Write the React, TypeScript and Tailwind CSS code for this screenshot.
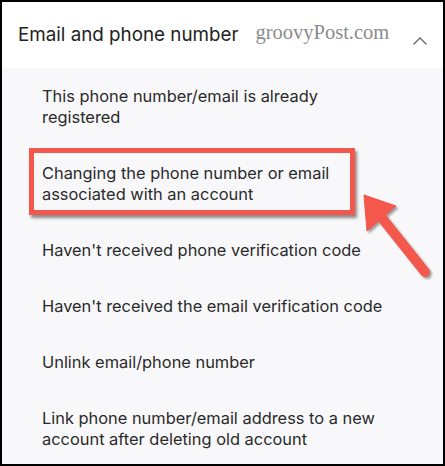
import React from 'react';

const itemLines: string[][] = [
  ['This phone number/email is already', 'registered'],
  ['Changing the phone number or email', 'associated with an account'],
  ["Haven't received phone verification code"],
  ["Haven't received the email verification code"],
  ['Unlink email/phone number'],
  ['Link phone number/email address to a new', 'account after deleting old account'],
];

function Arrow() {
  return (
    <svg className="absolute inset-0 pointer-events-none" width={445} height={466}>
      <defs>
        <filter id="sh" x="-20%" y="-20%" width="140%" height="140%">
          <feGaussianBlur stdDeviation="1.2" />
        </filter>
      </defs>
      <g transform="translate(2 2)" fill="#555" stroke="#555" opacity="0.55" filter="url(#sh)">
        <polygon points="362,193 394,204 365,229" />
        <line x1="376" y1="211" x2="423" y2="270" strokeWidth="10" strokeLinecap="round" />
      </g>
      <g fill="#f4574b" stroke="#f4574b">
        <polygon points="362,193 394,204 365,229" strokeLinejoin="round" strokeWidth="1" />
        <line x1="376" y1="211" x2="423" y2="270" strokeWidth="10" strokeLinecap="round" />
      </g>
    </svg>
  );
}

export default function App() {
  return (
    <div className="relative w-[445px] h-[466px] border-2 border-black bg-[#f8f8fa] overflow-hidden" style={{ fontFamily: 'Inter, "Open Sans", sans-serif' }}>
      <div className="h-[66px] bg-white flex items-center pl-[16px] pr-[15px]">
        <span className="text-[18.8px] text-[#222]">Email and phone number</span>
        <span className="ml-[17px] text-[20.5px] text-[#8c8c8c] -mt-[6px]" style={{ fontFamily: '"Liberation Serif", serif' }}>
          groovyPost.com
        </span>
        <svg className="ml-auto mt-[12px]" width="16" height="10" viewBox="0 0 16 10">
          <polyline points="1.5,8.5 8,2 14.5,8.5" fill="none" stroke="#666" strokeWidth="1.3" />
        </svg>
      </div>
      <div className="flex flex-col gap-[35px] pt-[18px] pl-[40px] pr-4">
        {itemLines.map((lines, i) => (
          <div key={lines[0]} className="relative text-[16.4px] leading-[21px] text-[#2a2a2a]">
            {lines.map(l => (
              <div key={l}>{l}</div>
            ))}
            {i === 1 && (
              <div className="absolute left-[-13px] top-[-15px] w-[326px] h-[67px] border-[5px] border-[#f4574b] shadow-[2px_3px_3px_rgba(0,0,0,0.45)]" />
            )}
          </div>
        ))}
      </div>
      <Arrow />
    </div>
  );
}
